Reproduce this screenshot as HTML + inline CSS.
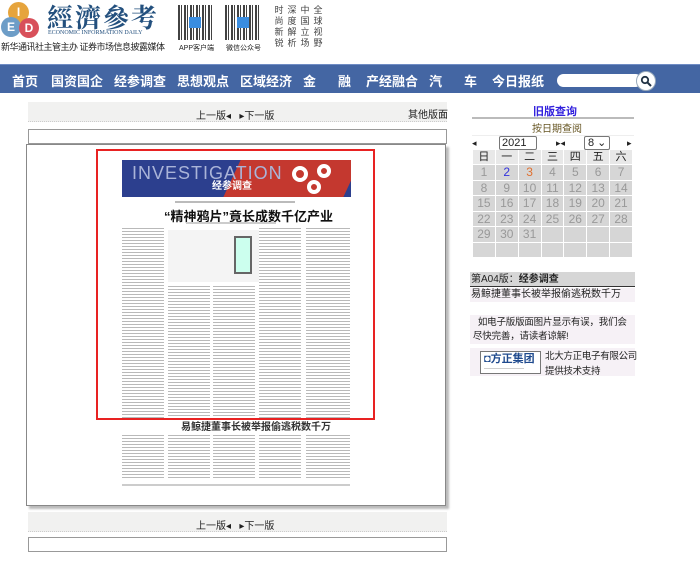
<!DOCTYPE html>
<html><head><meta charset="utf-8"><style>
*{margin:0;padding:0;box-sizing:border-box}
body{width:700px;height:567px;background:#fff;font-family:"Liberation Sans","Noto Sans CJK SC",sans-serif;position:relative;overflow:hidden;font-size:12px;color:#222}
.a{position:absolute}
.circ{position:absolute;border-radius:50%;color:#fff;font-weight:bold;text-align:center;font-size:12px}
.nav{left:0;top:64px;width:700px;height:29px;background:#4466a3;border-top:1px solid #6f8cc4}
.nav span{position:absolute;top:6px;color:#fff;font-weight:bold;font-size:13px;white-space:nowrap}
.qr{background:repeating-linear-gradient(90deg,#222 0 2px,#fff 2px 3px,#222 3px 4px,#fff 4px 6px),#fff;opacity:.85}
.bar{background:#f1f1f0;border-bottom:1px dotted #ccc}
.col{position:absolute;background:repeating-linear-gradient(180deg,#b9b9b9 0 1px,#fff 1px 3px)}
table{border-collapse:separate;border-spacing:1px;position:absolute;left:472px;top:149px;width:161px}
td{background:#d6d6d6;color:#999;text-align:center;font-size:12px;height:14.5px;padding:0;line-height:14px}
th{background:#e8e8e8;color:#222;font-weight:normal;font-size:11px;height:14px;line-height:14px}
.sc{position:absolute;font-size:9px;line-height:11px;color:#444;width:10px;text-align:center}
</style></head><body>
<div class="circ" style="left:8px;top:2px;width:21px;height:21px;background:#e6a43c;line-height:21px">I</div>
<div class="circ" style="left:1px;top:17px;width:20px;height:20px;background:#6d9dc7;line-height:20px">E</div>
<div class="circ" style="left:19px;top:18px;width:20px;height:20px;background:#d8505a;line-height:20px">D</div>
<div class="a" style="left:47px;top:2px;font-size:26px;font-family:'Noto Serif CJK SC',serif;font-weight:bold;color:#23507e;letter-spacing:2px;line-height:30px">經濟參考</div>
<div class="a" style="left:48px;top:30px;font-size:6px;font-family:'Liberation Serif',serif;color:#23507e">ECONOMIC INFORMATION DAILY</div>
<div class="a" style="left:1px;top:40px;font-size:9px;color:#222;white-space:nowrap;letter-spacing:-0.5px">新华通讯社主管主办 证券市场信息披露媒体</div>
<div class="a qr" style="left:178px;top:5px;width:35px;height:35px"></div>
<div class="a" style="left:189px;top:17px;width:12px;height:11px;background:#3a8de0"></div>
<div class="a" style="left:179px;top:43px;font-size:7px">APP客户端</div>
<div class="a qr" style="left:225px;top:5px;width:35px;height:35px"></div>
<div class="a" style="left:237px;top:17px;width:12px;height:11px;background:#3a8de0"></div>
<div class="a" style="left:226px;top:43px;font-size:7px">微信公众号</div>
<div class="sc" style="left:274px;top:5px">时<br>尚<br>新<br>锐</div>
<div class="sc" style="left:287px;top:5px">深<br>度<br>解<br>析</div>
<div class="sc" style="left:300px;top:5px">中<br>国<br>立<br>场</div>
<div class="sc" style="left:313px;top:5px">全<br>球<br>视<br>野</div>
<div class="a nav">
<span style="left:12px">首页</span><span style="left:51px">国资国企</span><span style="left:114px">经参调查</span><span style="left:177px">思想观点</span><span style="left:240px">区域经济</span><span style="left:303px">金</span><span style="left:338px">融</span><span style="left:366px">产经融合</span><span style="left:429px">汽</span><span style="left:464px">车</span><span style="left:492px">今日报纸</span>
<div class="a" style="left:557px;top:9px;width:85px;height:13px;background:#fff;border-radius:7px"></div>
<div class="a" style="left:636px;top:6px;width:20px;height:20px;background:#fff;border-radius:50%;border:1px solid #9ab"></div>
<svg class="a" style="left:640px;top:10px" width="13" height="13"><circle cx="5" cy="5" r="3.2" fill="none" stroke="#234" stroke-width="1.8"/><line x1="7.5" y1="7.5" x2="11" y2="11" stroke="#234" stroke-width="2"/></svg>
</div>
<div class="a bar" style="left:28px;top:102px;width:419px;height:20px"></div>
<div class="a" style="left:196px;top:107px;font-size:10px">上一版◂ &nbsp; ▸下一版</div>
<div class="a" style="left:408px;top:106px;font-size:10px">其他版面</div>
<div class="a" style="left:28px;top:129px;width:419px;height:15px;border:1px solid #999"></div>
<div class="a" style="left:26px;top:144px;width:420px;height:362px;border:1px solid #888;box-shadow:3px 3px 2px #bbb;background:#fff"></div>
<div class="a" style="left:112px;top:420px;width:248px;height:80px;border:2px solid #4a7fc0;border-top:none"></div>
<div class="a" style="left:112px;top:150px;width:248px;height:350px;background:#fff"></div>
<div class="a" style="left:122px;top:160px;width:229px;height:37px;background:#2c3f8e;overflow:hidden">
<div class="a" style="left:110px;top:0;width:120px;height:37px;background:#c4382f;transform:skewX(-25deg)"></div>
<div class="a" style="left:10px;top:3px;color:#aab4d8;font-size:18px;letter-spacing:1px">INVESTIGATION</div>
<div class="a" style="left:90px;top:17px;color:#fff;font-size:10px;font-weight:bold">经参调查</div>
<div class="a" style="left:170px;top:6px;width:16px;height:16px;border:4px solid #fff;border-radius:50%"></div>
<div class="a" style="left:195px;top:4px;width:14px;height:14px;border:4px solid #fff;border-radius:50%"></div>
<div class="a" style="left:185px;top:20px;width:14px;height:14px;border:4px solid #fff;border-radius:50%"></div>
</div>
<div class="a" style="left:164px;top:206px;font-size:13px;font-weight:bold;color:#111;white-space:nowrap">“精神鸦片”竟长成数千亿产业</div>
<div class="a" style="left:175px;top:201px;width:120px;height:2px;background:#bbb"></div>
<div class="a" style="left:186px;top:222px;width:90px;height:2px;background:#ccc"></div>
<div class="col" style="left:122px;top:228px;width:42px;height:190px"></div>
<div class="a" style="left:168px;top:230px;width:100px;height:52px;background:#f4f4f4"></div>
<div class="a" style="left:234px;top:236px;width:18px;height:38px;border:2px solid #666;background:#cfe"></div>
<div class="col" style="left:168px;top:286px;width:42px;height:132px"></div>
<div class="col" style="left:213px;top:286px;width:42px;height:132px"></div>
<div class="col" style="left:259px;top:228px;width:42px;height:190px"></div>
<div class="col" style="left:306px;top:228px;width:44px;height:190px"></div>
<div class="a" style="left:96px;top:149px;width:279px;height:271px;border:2px solid #e82222"></div>
<div class="a" style="left:181px;top:422px;font-size:10px;line-height:11px;font-weight:bold;color:#333;white-space:nowrap">易鲸捷董事长被举报偷逃税数千万</div>
<div class="col" style="left:122px;top:435px;width:42px;height:45px"></div>
<div class="col" style="left:168px;top:435px;width:42px;height:45px"></div>
<div class="col" style="left:213px;top:435px;width:42px;height:45px"></div>
<div class="col" style="left:259px;top:435px;width:42px;height:45px"></div>
<div class="col" style="left:306px;top:435px;width:44px;height:45px"></div>
<div class="a" style="left:122px;top:484px;width:228px;height:2px;background:#ccc"></div>
<div class="a bar" style="left:28px;top:512px;width:419px;height:20px"></div>
<div class="a" style="left:196px;top:517px;font-size:10px">上一版◂ &nbsp; ▸下一版</div>
<div class="a" style="left:28px;top:537px;width:419px;height:15px;border:1px solid #999"></div>
<div class="a" style="left:533px;top:103px;color:#3322dd;font-weight:bold;font-size:11px">旧版查询</div>
<div class="a" style="left:472px;top:117px;width:162px;height:2px;background:#bbb"></div>
<div class="a" style="left:532px;top:120px;color:#665522;font-size:10px">按日期查阅</div>
<div class="a" style="left:472px;top:135px;width:162px;height:1px;background:#eee"></div>
<div class="a" style="left:472px;top:138px;font-size:9px">◂</div>
<div class="a" style="left:499px;top:136px;width:38px;height:14px;border:1px solid #777;border-radius:2px;font-size:11px;line-height:12px;padding-left:2px">2021 ⌄</div>
<div class="a" style="left:556px;top:138px;font-size:9px">▸◂</div>
<div class="a" style="left:584px;top:136px;width:26px;height:14px;border:1px solid #777;border-radius:2px;font-size:11px;line-height:12px;padding-left:3px">8 ⌄</div>
<div class="a" style="left:627px;top:138px;font-size:9px">▸</div>
<table>
<tr><th>日</th><th>一</th><th>二</th><th>三</th><th>四</th><th>五</th><th>六</th></tr>
<tr><td>1</td><td style="color:#33d">2</td><td style="color:#e07030">3</td><td>4</td><td>5</td><td>6</td><td>7</td></tr>
<tr><td>8</td><td>9</td><td>10</td><td>11</td><td>12</td><td>13</td><td>14</td></tr>
<tr><td>15</td><td>16</td><td>17</td><td>18</td><td>19</td><td>20</td><td>21</td></tr>
<tr><td>22</td><td>23</td><td>24</td><td>25</td><td>26</td><td>27</td><td>28</td></tr>
<tr><td>29</td><td>30</td><td>31</td><td></td><td></td><td></td><td></td></tr>
<tr><td></td><td></td><td></td><td></td><td></td><td></td><td></td></tr>
</table>
<div class="a" style="left:470px;top:272px;width:165px;height:15px;background:#d6d6d6;border-bottom:1px solid #333;font-size:10px;line-height:15px;padding-left:1px">第A04版：<b>经参调查</b></div>
<div class="a" style="left:470px;top:288px;width:165px;height:14px;background:#f6f1f6;font-size:10px;line-height:14px;padding-left:1px">易鲸捷董事长被举报偷逃税数千万</div>
<div class="a" style="left:470px;top:315px;width:165px;height:29px;background:#f6f1f6;font-size:9.5px;line-height:14px;padding:1px 2px 0 3px;letter-spacing:-0.2px">&nbsp;&nbsp;如电子版版面图片显示有误，我们会尽快完善，请读者谅解!</div>
<div class="a" style="left:470px;top:348px;width:165px;height:28px;background:#f6f1f6"></div>
<div class="a" style="left:480px;top:351px;width:61px;height:23px;border:1px solid #777;background:#fff;color:#1f4a8e;font-weight:bold;font-size:11px;line-height:14px;padding-left:3px;overflow:hidden;white-space:nowrap">◘方正集团<div style="font-size:4px;color:#999;line-height:5px">━━━━━━━━━━</div></div>
<div class="a" style="left:545px;top:349px;font-size:9.5px;line-height:15px;white-space:nowrap;letter-spacing:-0.3px">北大方正电子有限公司<br>提供技术支持</div>
</body></html>
